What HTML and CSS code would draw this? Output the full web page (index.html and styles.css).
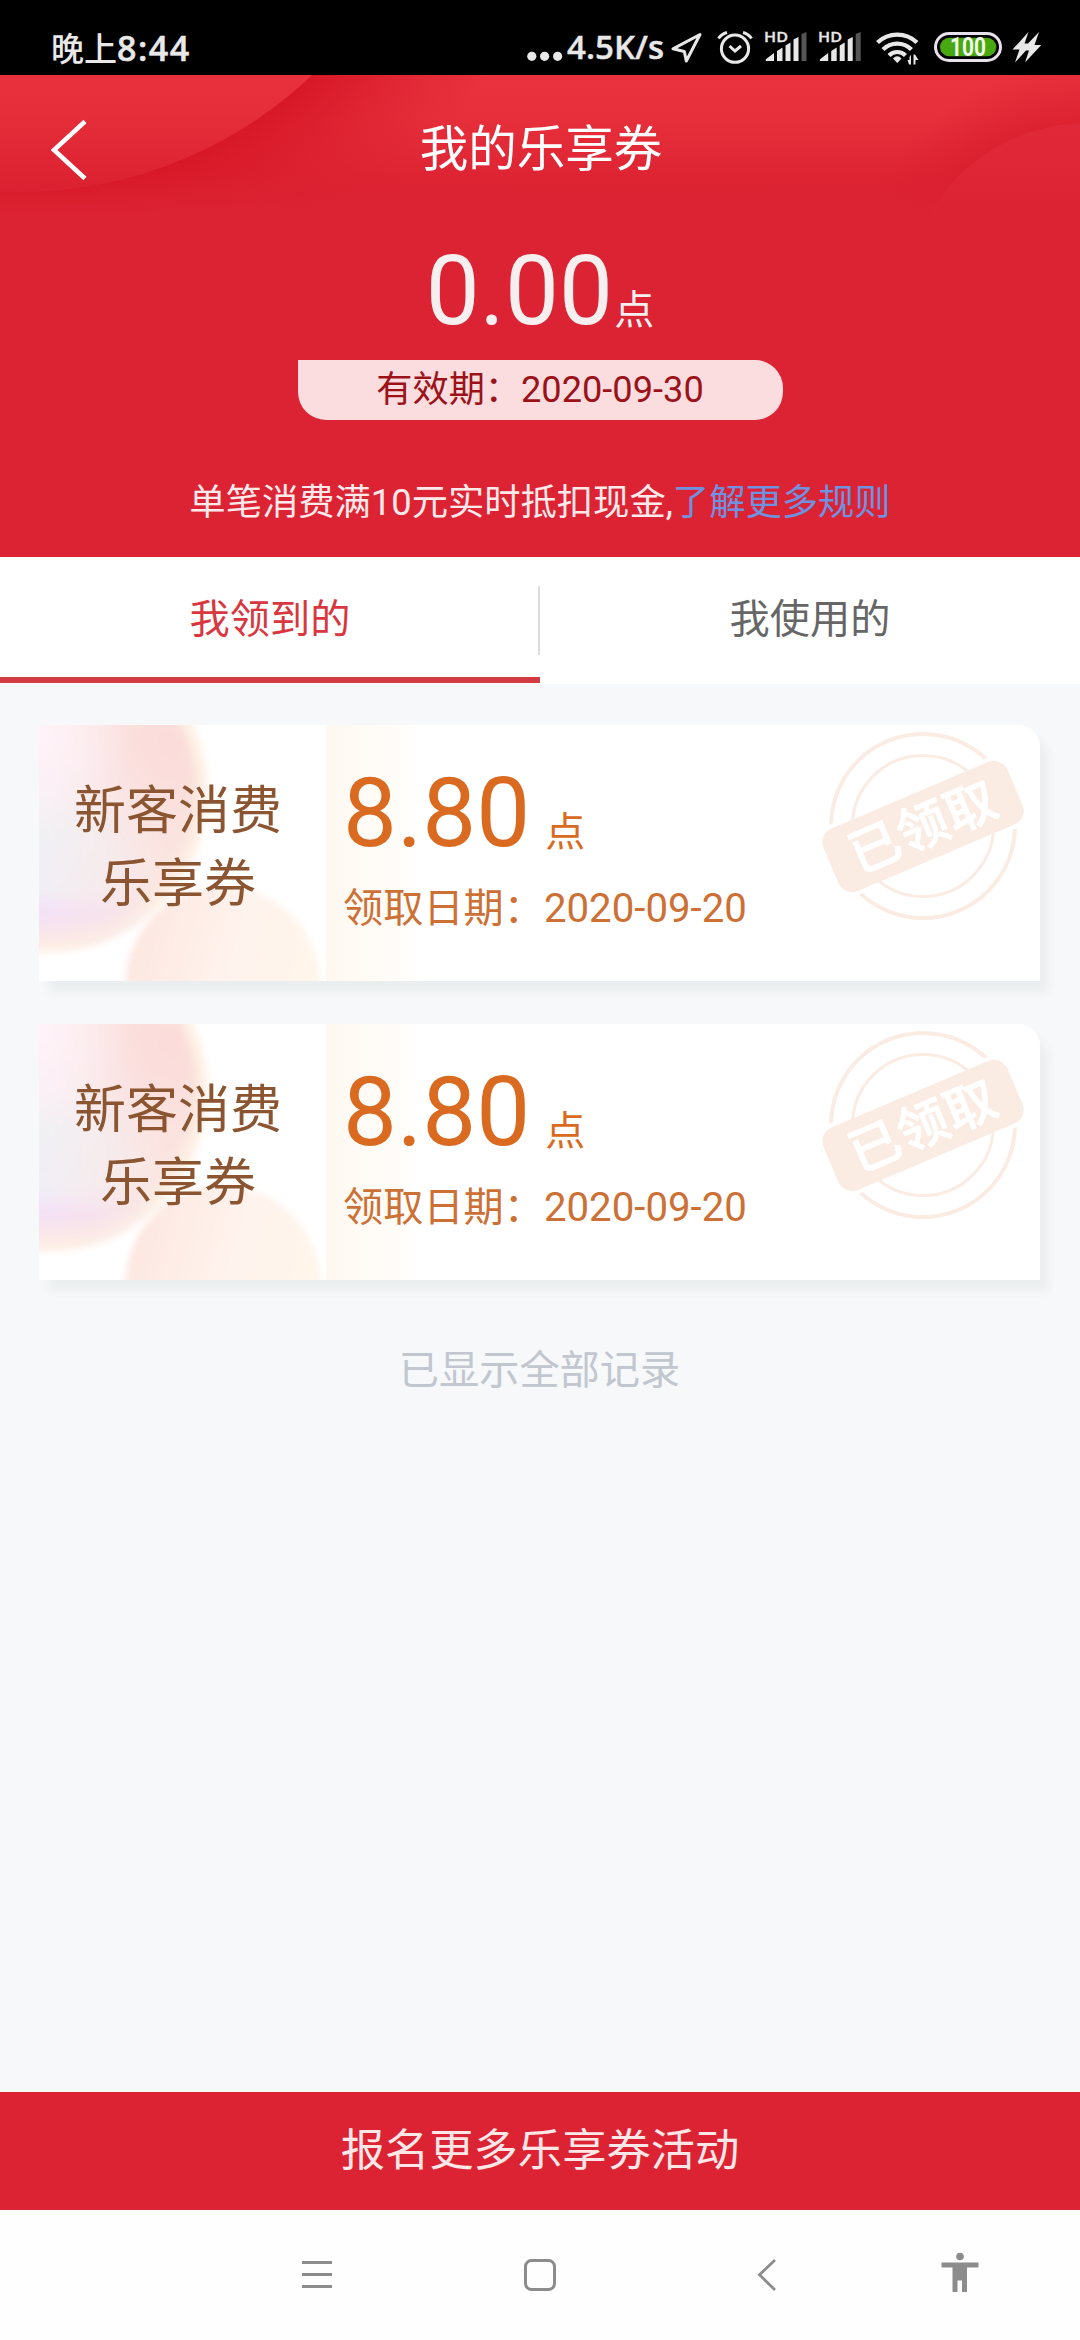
FILE: index.html
```html
<!DOCTYPE html>
<html lang="zh-CN">
<head>
<meta charset="utf-8">
<title>我的乐享券</title>
<link rel="stylesheet" href="styles.css">
</head>
<body>
<svg class="defs" width="0" height="0" aria-hidden="true">
  <defs>
    <radialGradient id="blobA" gradientUnits="userSpaceOnUse" cx="9" cy="67" r="164">
      <stop offset="0" stop-color="#fbebee"/><stop offset=".85" stop-color="#fbe5e1"/><stop offset=".93" stop-color="#fdeee2"/><stop offset="1" stop-color="#fffaf4"/>
    </radialGradient>
    <linearGradient id="blobATint" x1="0" y1="0" x2="0" y2="1">
      <stop offset=".3" stop-color="#fdf1f8" stop-opacity="0"/><stop offset=".62" stop-color="#f0f0f3"/><stop offset=".8" stop-color="#f1eef5"/><stop offset=".88" stop-color="#f3e0f7"/><stop offset=".96" stop-color="#fbe8e6"/><stop offset="1" stop-color="#fff3e8"/>
    </linearGradient>
    <linearGradient id="fade" x1="0" y1="0" x2="1" y2="0">
      <stop offset=".5" stop-color="#fff"/><stop offset=".85" stop-color="#fff" stop-opacity="0"/>
    </linearGradient>
    <radialGradient id="blobPink" gradientUnits="userSpaceOnUse" cx="130" cy="20" r="120">
      <stop offset="0" stop-color="#fad5d3" stop-opacity=".6"/><stop offset="1" stop-color="#fad5d3" stop-opacity="0"/>
    </radialGradient>
    <radialGradient id="blobLight" gradientUnits="userSpaceOnUse" cx="0" cy="10" r="90">
      <stop offset="0" stop-color="#fff4fa"/><stop offset="1" stop-color="#fff4fa" stop-opacity="0"/>
    </radialGradient>
    <linearGradient id="blobB" x1="0" y1=".2" x2="1" y2=".5">
      <stop offset="0" stop-color="#fde5df"/><stop offset=".55" stop-color="#fff3ed"/><stop offset="1" stop-color="#fff5ea"/>
    </linearGradient>
    <mask id="tintMask"><rect x="-160" y="-100" width="330" height="360" fill="url(#fade)"/></mask>
    <filter id="soft"><feGaussianBlur stdDeviation="3"/></filter>
    <mask id="ringMask"><rect width="210" height="210" fill="#fff"/><rect x="1" y="66.500" width="208" height="76" rx="18" fill="#000" transform="rotate(-23 105 104.500)"/></mask>
    <symbol id="blobs" viewBox="0 0 287 256">
      <g filter="url(#soft)">
        <circle cx="9" cy="67" r="161" fill="url(#blobA)"/>
        <circle cx="9" cy="67" r="161" fill="url(#blobATint)" mask="url(#tintMask)"/>
        <circle cx="9" cy="67" r="149" fill="url(#blobPink)"/>
        <circle cx="9" cy="67" r="156" fill="url(#blobLight)"/>
        <circle cx="184" cy="259" r="97" fill="url(#blobB)"/>
      </g>
    </symbol>
    <symbol id="stamp" viewBox="0 0 210 210">
      <circle cx="105" cy="104" r="92" fill="none" stroke="#faece3" stroke-width="4" mask="url(#ringMask)"/>
      <circle cx="105" cy="104" r="70.500" fill="none" stroke="#faece3" stroke-width="3"/>
      <g transform="rotate(-23 105 104.500)">
        <rect x="5" y="70.500" width="200" height="68" rx="15" fill="#faece3"/>
        <text class="stamp-text" x="105" y="123" text-anchor="middle">已领取</text>
      </g>
    </symbol>
    <symbol id="signal" viewBox="0 0 42 32">
      <path fill="#e8e8e8" d="M0 30V28.500L8.500 22V30ZM11.500 30V20L17 16.500V30ZM20 30V14.500L25 11.500V30ZM28 30V8.500L33 6V30Z"/>
      <path fill="#555" d="M36 3 41 1V30H36Z"/>
    </symbol>
  </defs>
</svg>

<div class="status">
  <span class="clock">晚上<span class="clock-digits">8:44</span></span>
  <svg class="status-icons" width="530" height="45" viewBox="525 25 530 45">
    <g fill="#e8e8e8"><circle cx="531.800" cy="56.300" r="4.600"/><circle cx="544.600" cy="56.300" r="4.600"/><circle cx="557.600" cy="56.300" r="4.600"/></g>
    <text class="speed" x="567" y="59.300" textLength="97" lengthAdjust="spacingAndGlyphs">4.5K/s</text>
    <path d="M700 34.500 673 48.800 684.300 51.500 686.300 61Z" fill="none" stroke="#e8e8e8" stroke-width="3" stroke-linejoin="round"/>
    <g fill="none" stroke="#e8e8e8" stroke-width="3">
      <circle cx="735" cy="48.700" r="13.600"/>
      <path d="M718.500 38.500Q721.500 34 727 32.500M743 32.500Q748.500 34 751.500 38.500M729.500 46 735 51 741 46"/>
    </g>
    <text class="hd" x="764" y="42" textLength="24" lengthAdjust="spacingAndGlyphs">HD</text>
    <use href="#signal" x="765.500" y="31" width="42" height="32"/>
    <text class="hd" x="818" y="42" textLength="24" lengthAdjust="spacingAndGlyphs">HD</text>
    <use href="#signal" x="819.700" y="31" width="42" height="32"/>
    <g fill="none" stroke="#e8e8e8" stroke-width="4.200">
      <path d="M877.500 42.500A28.500 28.500 0 0 1 917 42.500M883 49.500A20 20 0 0 1 911.500 49.500M889 55.500A11.500 11.500 0 0 1 905.500 55.500"/>
    </g>
    <path fill="#e8e8e8" d="M893 58.500Q897.300 54 901.500 58.500L897.300 63Z"/>
    <path fill="#e8e8e8" d="M911 54.500V64.500H909L907.500 60H909.500V57ZM913.500 54.500H915L918.500 60H915.500V64.500H913.500Z"/>
    <rect x="935.500" y="33.500" width="65" height="27" rx="13.500" fill="none" stroke="#e8e0ea" stroke-width="3"/>
    <rect x="940" y="37.700" width="56.300" height="18.600" rx="9.300" fill="#47a80f"/>
    <text class="battery" x="950" y="56" textLength="36" lengthAdjust="spacingAndGlyphs">100</text>
    <path fill="#e8e8e8" d="M1028.500 32 1012.500 49.500H1019.500L1015 62.500 1026 50.500H1029L1025 62.500 1041.300 45H1034.500L1039 32 1028 43.500H1024.500Z"/>
  </svg>
</div>

<header class="hero">
  <svg class="hero-art" width="1080" height="145" viewBox="0 75 1080 145" aria-hidden="true">
    <defs>
      <linearGradient id="top" x1="0" y1="0" x2="0" y2="1"><stop offset="0" stop-color="#e9323e"/><stop offset=".3" stop-color="#e72f3b"/><stop offset=".7" stop-color="#de2433"/><stop offset=".95" stop-color="#da212f"/><stop offset="1" stop-color="#dc2334"/></linearGradient>
      <linearGradient id="disc" x1="0" y1="75" x2="0" y2="195" gradientUnits="userSpaceOnUse"><stop offset="0" stop-color="#e8313c"/><stop offset=".3" stop-color="#e62e3a"/><stop offset="1" stop-color="#db2030"/></linearGradient>
      <radialGradient id="sh1" gradientUnits="userSpaceOnUse" cx="20" cy="-231" r="560"><stop offset=".755" stop-color="#d81827"/><stop offset="1" stop-color="#db2030" stop-opacity="0"/></radialGradient>
      <radialGradient id="sh2" gradientUnits="userSpaceOnUse" cx="1087" cy="304" r="240"><stop offset=".75" stop-color="#d91e2e" stop-opacity=".75"/><stop offset="1" stop-color="#db2030" stop-opacity="0"/></radialGradient>
      <linearGradient id="end" x1="0" y1="0" x2="0" y2="1"><stop offset="0" stop-color="#dc2334" stop-opacity="0"/><stop offset="1" stop-color="#dc2334"/></linearGradient>
      <linearGradient id="disc2" x1="0" y1="0" x2="0" y2="1"><stop offset="0" stop-color="#e12838"/><stop offset=".22" stop-color="#de2535"/><stop offset=".3" stop-color="#dc2334"/></linearGradient>
    </defs>
    <rect y="75" width="1080" height="145" fill="url(#top)"/>
    <circle cx="20" cy="-231" r="560" fill="url(#sh1)"/>
    <circle cx="20" cy="-231" r="423" fill="url(#disc)"/>
    <circle cx="1087" cy="304" r="240" fill="url(#sh2)"/>
    <circle cx="1087" cy="304" r="181" fill="url(#disc2)"/>
    <rect y="170" width="1080" height="50" fill="url(#end)"/>
  </svg>
  <div class="titlebar">
    <svg class="back" width="36" height="60" viewBox="0 0 36 60"><path d="M34 1.500 3 30 34 58.500" fill="none" stroke="#fff" stroke-width="4.500"/></svg>
    <h1 class="title">我的乐享券</h1>
  </div>
  <div class="balance"><span class="balance-num">0.00</span><span class="balance-unit">点</span></div>
  <div class="expiry">有效期：2020-09-30</div>
  <p class="tip">单笔消费满10元实时抵扣现金,<a class="tip-link">了解更多规则</a></p>
</header>

<nav class="tabs">
  <div class="tab tab-active">我领到的</div>
  <div class="tab">我使用的</div>
</nav>

<main class="list">
  <article class="card">
    <div class="card-name"><svg class="blobs" width="287" height="256"><use href="#blobs"/></svg><span class="card-label">新客消费<br>乐享券</span></div>
    <div class="card-info">
      <div class="amount">8.80<span class="amount-unit">点</span></div>
      <div class="date">领取日期：2020-09-20</div>
    </div>
    <svg class="stamp" width="210" height="210"><use href="#stamp"/></svg>
  </article>
  <article class="card">
    <div class="card-name"><svg class="blobs" width="287" height="256"><use href="#blobs"/></svg><span class="card-label">新客消费<br>乐享券</span></div>
    <div class="card-info">
      <div class="amount">8.80<span class="amount-unit">点</span></div>
      <div class="date">领取日期：2020-09-20</div>
    </div>
    <svg class="stamp" width="210" height="210"><use href="#stamp"/></svg>
  </article>
  <p class="end">已显示全部记录</p>
</main>

<div class="action">报名更多乐享券活动</div>

<footer class="sysnav">
  <svg class="nav-menu" width="40" height="40" viewBox="0 0 40 40"><path d="M5 8.500H35M5 20.500H35M5 32.500H35" stroke="#8c8c8c" stroke-width="2.800"/></svg>
  <svg class="nav-home" width="40" height="40" viewBox="0 0 40 40"><rect x="5.500" y="6.500" width="29" height="29" rx="6" fill="none" stroke="#8c8c8c" stroke-width="3"/></svg>
  <svg class="nav-back" width="40" height="40" viewBox="0 0 40 40"><path d="M28 6 12.500 20.700 28 36" fill="none" stroke="#8c8c8c" stroke-width="2.800"/></svg>
  <svg class="nav-access" width="40" height="40" viewBox="0 0 40 40"><circle cx="20" cy="2.500" r="3.800" fill="#8c8c8c"/><path fill="#8c8c8c" d="M1.500 8.500H38.500V13.500H27V38H22V26.500H17.500V38H12.500V13.500H1.500Z"/></svg>
</footer>
</body>
</html>
```
FILE: styles.css
```css
* { box-sizing: border-box; }

body {
  margin: 0;
  width: 1080px;
  height: 2340px;
  display: flex;
  flex-direction: column;
  background: #f6f8fa;
  font-family: Roboto, "Noto Sans CJK SC", sans-serif;
  overflow: hidden;
}

svg { display: block; flex: none; overflow: visible; }
.defs { position: absolute; }

.status {
  height: 75px;
  flex: none;
  display: flex;
  justify-content: space-between;
  padding: 25px 25px 0 51px;
  background: #000;
}
.clock {
  font: 500 33px/44px "Noto Sans CJK SC", sans-serif;
  color: #e8e8e8;
}
.clock-digits { font: 600 34px/44px "Open Sans", sans-serif; letter-spacing: 1.500px; -webkit-text-stroke: .5px #e8e8e8; }
.speed { font: 600 33px "Open Sans", sans-serif; fill: #e8e8e8; stroke: #e8e8e8; stroke-width: .4px; }
.hd { font: 600 15px "Open Sans", sans-serif; fill: #e8e8e8; stroke: #e8e8e8; stroke-width: .3px; }
.battery { font: 700 25px Roboto, sans-serif; fill: #f2f5ea; }

.hero {
  height: 482px;
  flex: none;
  position: relative;
  display: flex;
  flex-direction: column;
  align-items: center;
  background: #dc2334;
}
.hero-art { position: absolute; left: 0; top: 0; overflow: hidden; }
.titlebar {
  position: relative;
  width: 100%;
  height: 145px;
  display: grid;
  grid-template-columns: 100px 1fr 100px;
  align-items: center;
}
.back { margin-left: 51px; margin-top: 5px; }
.title { margin: 4px 0 0 2px; text-align: center; font-size: 48.500px; font-weight: 400; line-height: 72px; color: #fff; }

.balance { height: 140px; line-height: 142px; color: #f5efef; white-space: nowrap; }
.balance-num { font-size: 96px; }
.balance-unit { margin-left: 1.500px; font-size: 40px; }
.expiry {
  width: 485px;
  height: 60px;
  border-radius: 0 28px 28px 28px;
  background: #fbdde0;
  color: #9b1219;
  font-size: 36.200px;
  line-height: 59px;
  text-align: center;
}
.tip { margin: 56px 0 0; font-size: 36.300px; line-height: 54px; color: #ffe9ea; }
.tip-link { color: #6f92e0; }

.tabs { height: 127px; flex: none; display: flex; background: #fff; }
.tab {
  position: relative;
  flex: 1;
  height: 126px;
  border-bottom: 6px solid transparent;
  text-align: center;
  font-size: 40.200px;
  line-height: 125px;
  color: #666;
}
.tab-active { color: #d8373f; border-color: #d33a41; }
.tab-active::after {
  content: "";
  position: absolute;
  right: 0;
  top: 29px;
  width: 2px;
  height: 69px;
  background: #dcdcdc;
}

.list { flex: 1; padding: 41px 40px 0 39px; display: flex; flex-direction: column; gap: 43px; }
.card {
  position: relative;
  height: 256px;
  display: flex;
  border-radius: 0 22px 0 0;
  background: #fff;
  box-shadow: 9px 12px 8px -1px #ebeeee;
}
.card-name { position: relative; width: 287px; display: grid; place-items: center; }
.blobs { position: absolute; left: 0; top: 0; overflow: hidden; }
.card-label {
  position: relative;
  padding: 0 9px 11px 0;
  text-align: center;
  font-size: 52px;
  line-height: 73px;
  color: #8a5530;
}
.card-info {
  flex: 1;
  padding: 29px 0 0 17px;
  border-radius: 0 22px 0 0;
  background: linear-gradient(90deg, #fff8f1, #fffdf9 75px, #fff 95px);
  color: #d96a20;
}
.amount { font-size: 96px; line-height: 118px; }
.amount-unit { margin-left: 15px; font-size: 40px; }
.date { margin-top: -13px; font-size: 40.200px; line-height: 60px; color: #cd7035; }
.stamp { position: absolute; right: 12px; top: -3px; }
.stamp-text { font: 500 51px "Noto Sans CJK SC", sans-serif; letter-spacing: 1px; fill: #fff; stroke: #fff; stroke-width: .8px; }
.end { margin: 18px 0 0; text-align: center; font-size: 40.200px; line-height: 60px; color: #c2c6cf; }

.action {
  height: 118px;
  flex: none;
  background: #dc2334;
  color: #ffe6e7;
  text-align: center;
  font-size: 44.300px;
  line-height: 118px;
}
.sysnav { height: 130px; flex: none; display: flex; padding: 44px 0 0 297px; background: #fefefe; }
.nav-home { margin-left: 183px; }
.nav-back { margin-left: 187px; }
.nav-access { margin-left: 153px; }
```
